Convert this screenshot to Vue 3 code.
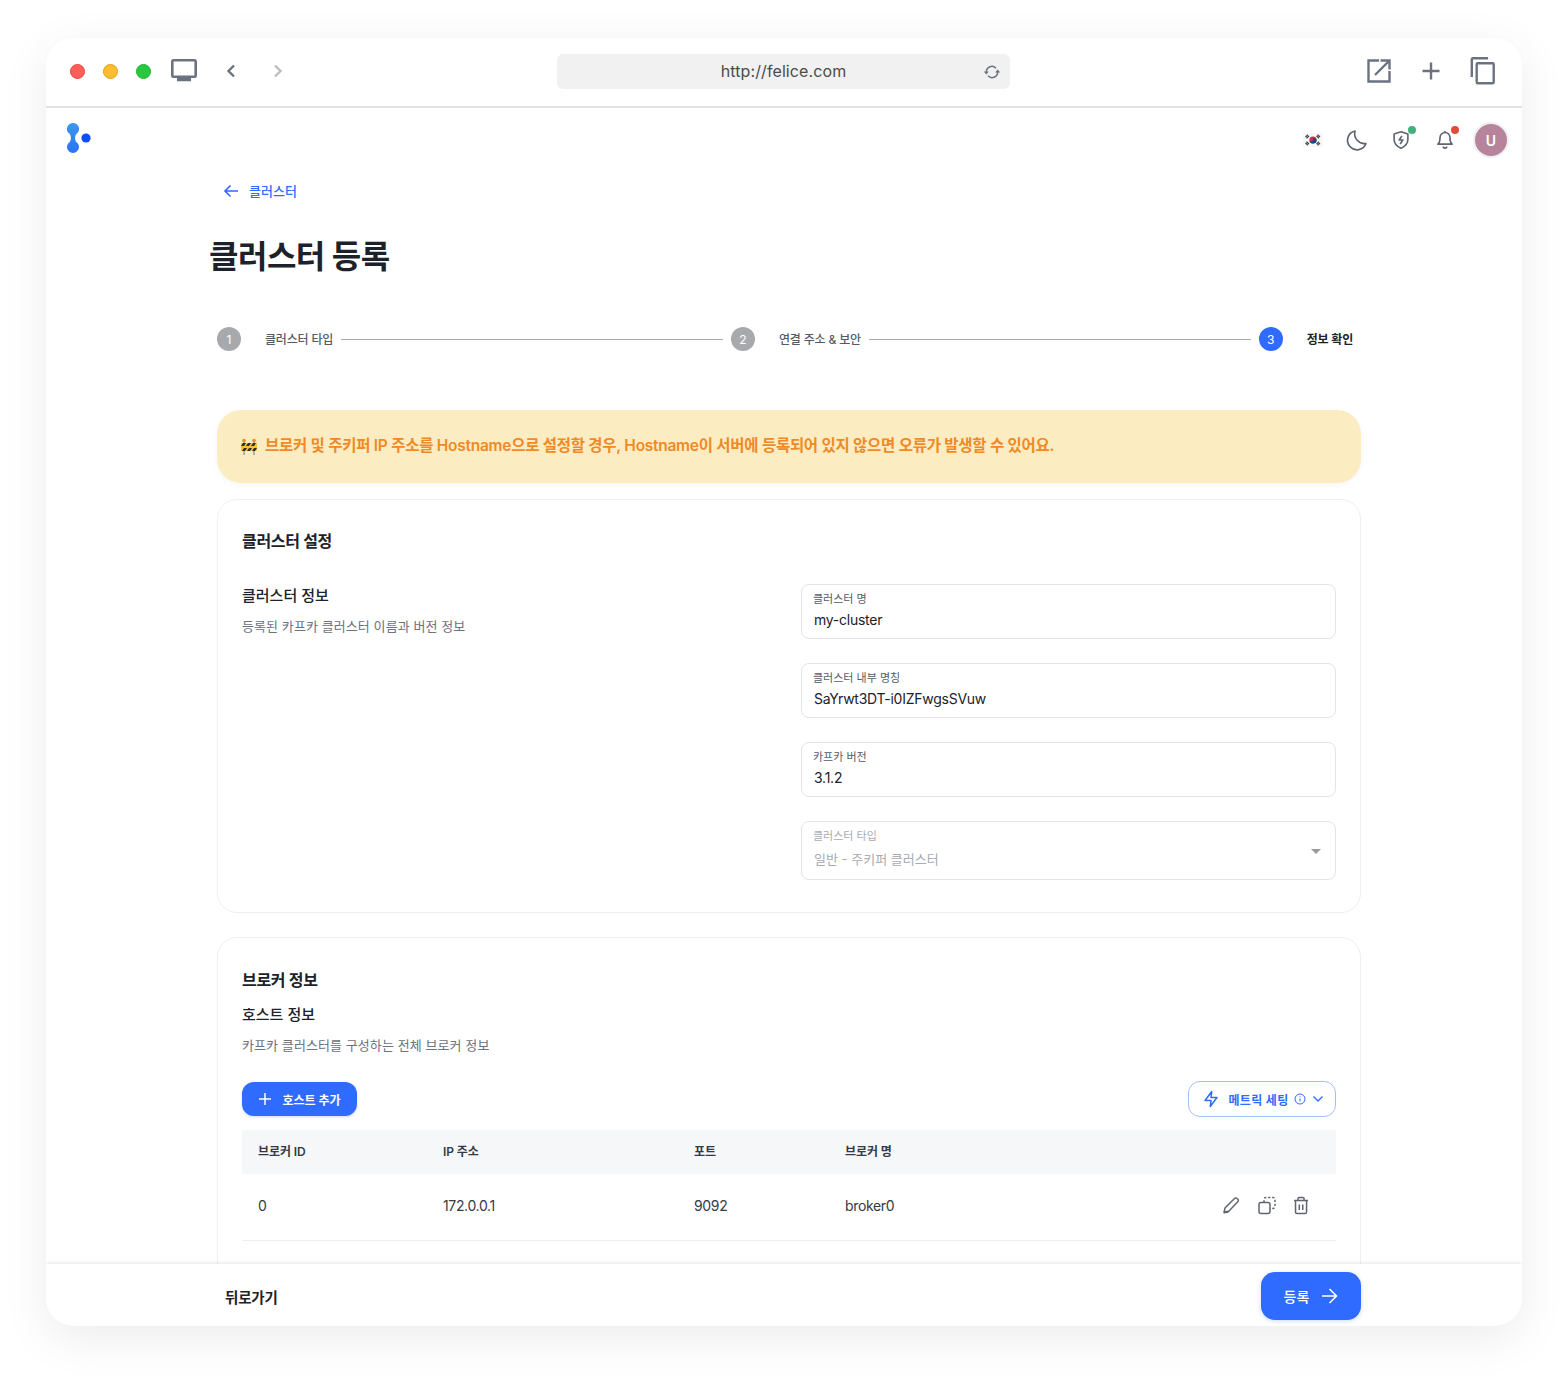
<script setup>
import { ref } from 'vue'

// 단계 표시
const steps = ref([
  { no: 1, label: '클러스터 타입', active: false },
  { no: 2, label: '연결 주소 & 보안', active: false },
  { no: 3, label: '정보 확인', active: true }
])

const fields = ref([
  { label: '클러스터 명', value: 'my-cluster' },
  { label: '클러스터 내부 명칭', value: 'SaYrwt3DT-i0IZFwgsSVuw' },
  { label: '카프카 버전', value: '3.1.2' }
])

const brokers = ref([
  { id: '0', ip: '172.0.0.1', port: '9092', name: 'broker0' }
])
</script>

<template>
  <div class="shell">
    <div class="window">
      <!-- 브라우저 상단 -->
      <header class="titlebar">
        <div class="titlebar__left">
          <span class="light light--red"></span>
          <span class="light light--yellow"></span>
          <span class="light light--green"></span>
          <svg class="monitor" width="26" height="24" viewBox="0 0 26 24" fill="none" stroke="#6b7280">
            <rect x="1.3" y="1.3" width="23.4" height="16.4" rx="1.5" stroke-width="2.6" />
            <path d="M6 20.5h14" stroke-width="3.6" />
          </svg>
          <svg class="chev" width="12" height="16" viewBox="0 0 12 16" fill="none" stroke="#6b7280" stroke-width="2.4">
            <path d="M9 2.5 3.5 8 9 13.5" />
          </svg>
          <svg class="chev chev--next" width="12" height="16" viewBox="0 0 12 16" fill="none" stroke="#bdbdbd" stroke-width="2.4">
            <path d="M3 2.5 8.5 8 3 13.5" />
          </svg>
        </div>
        <div class="urlbar">
          <span>http://felice.com</span>
          <svg class="urlbar__reload" width="18" height="14" viewBox="0 0 18 14" fill="none" stroke="#6b7280" stroke-width="1.5">
            <path d="M3.4 7a5.4 5.4 0 0 1 9.6-3.6" />
            <path d="M14.6 7A5.4 5.4 0 0 1 5 10.6" />
            <path d="M.8 6.4h5L3.3 9.4z" fill="#6b7280" stroke="none" />
            <path d="M12.2 7.6h5l-2.5-3z" fill="#6b7280" stroke="none" />
          </svg>
        </div>
        <div class="titlebar__right">
          <svg width="26" height="26" viewBox="0 0 26 26" fill="none" stroke="#6b7280" stroke-width="2.4">
            <path d="M13 2.500H2.500v21h21V13" />
            <path d="M9 17 23 3M14.500 2.500h9v9" />
          </svg>
          <svg width="20" height="20" viewBox="0 0 20 20" fill="none" stroke="#6b7280" stroke-width="2.4">
            <path d="M10 1.500v17M1.500 10h17" />
          </svg>
          <svg width="26" height="28" viewBox="0 0 26 28" fill="none" stroke="#6b7280" stroke-width="2.4">
            <path d="M1.800 20V2.200a1 1 0 0 1 1-1H18" />
            <rect x="6.700" y="6.200" width="17" height="20" rx="1" />
          </svg>
        </div>
      </header>

      <div class="body">
        <div class="topbar">
          <svg width="24" height="30" viewBox="0 0 24 30">
            <defs>
              <linearGradient id="logoGrad" x1="0" y1="0" x2="0" y2="1">
                <stop offset="0" stop-color="#3d97f0" />
                <stop offset="1" stop-color="#2a72f6" />
              </linearGradient>
            </defs>
            <path d="M6 0a6 6 0 0 1 4.500 10c-3.200 1.700-3.200 8.300 0 10a6 6 0 1 1-9 0c3.200-1.700 3.200-8.300 0-10A6 6 0 0 1 6 0z" fill="url(#logoGrad)" />
            <circle cx="19" cy="15" r="4.600" fill="#0b4dff" />
          </svg>
          <div class="topbar__tools">
            <span class="tool">
              <svg width="20" height="14" viewBox="0 0 20 14">
                <rect width="20" height="14" fill="#f7f7f7" />
                <circle cx="10" cy="7" r="3.600" fill="#cd2e3a" />
                <path d="M6.400 7a3.600 3.600 0 0 0 7.200 0 1.800 1.800 0 0 0-3.600 0 1.800 1.800 0 0 1-3.600 0z" fill="#0f4a8a" />
                <path d="M2.500 4 5 1.800M3.500 5.200 6 3M14.500 1.800 17 4M13.500 3 16 5.200M2.500 10 5 12.200M3.500 8.800 6 11M14.500 12.200 17 10M13.500 11 16 8.800" stroke="#444" stroke-width="1.200" />
              </svg>
            </span>
            <span class="tool">
              <svg width="24" height="24" viewBox="0 0 24 24" fill="none" stroke="#5f6672" stroke-width="1.700" stroke-linecap="round" stroke-linejoin="round">
                <path d="M10 3a9.500 9.500 0 1 0 11 12.500A10 10 0 0 1 10 3z" />
              </svg>
            </span>
            <span class="tool">
              <svg width="22" height="22" viewBox="0 0 24 24" fill="none" stroke="#5f6672" stroke-width="1.800" stroke-linejoin="round">
                <path d="M12 3l7.500 2.500v6c0 4.500-3 7.500-7.500 9.500-4.500-2-7.500-5-7.500-9.500v-6z" />
                <path d="M13 7.500 10 12h4l-3 4.500" />
              </svg>
              <i class="dot dot--green"></i>
            </span>
            <span class="tool tool--last">
              <svg width="20" height="22" viewBox="0 0 24 24" fill="none" stroke="#5f6672" stroke-width="2" stroke-linecap="round" stroke-linejoin="round">
                <path d="M6 9a6 6 0 0 1 12 0c0 6 2.500 8 2.500 8h-17S6 15 6 9z" />
                <path d="M10 20.500a2.200 2.200 0 0 0 4 0M12 3V2" />
              </svg>
              <i class="dot dot--red"></i>
            </span>
            <span class="avatar">U</span>
          </div>
        </div>

        <main class="page">
          <a class="back">
            <svg width="16" height="14" viewBox="0 0 16 14" fill="none" stroke="#2f6bff" stroke-width="1.600">
              <path d="M15 7H2M7.500 1.500 2 7l5.500 5.500" />
            </svg>
            <span class="back__text">클러스터</span>
          </a>
          <h1 class="title">클러스터 등록</h1>

          <ol class="stepper">
            <template v-for="(step, i) in steps" :key="step.no">
              <li class="step" :class="{ 'step--active': step.active }">
                <span class="step__no">{{ step.no }}</span>
                <span class="step__label">{{ step.label }}</span>
              </li>
              <li v-if="i < steps.length - 1" class="step__line"></li>
            </template>
          </ol>

          <div class="alert">
            <svg width="16" height="17" viewBox="0 0 16 17">
              <path d="M3 3v14M13 3v14" stroke="#a3a3a3" stroke-width="1.600" />
              <circle cx="3" cy="2.500" r="1.800" fill="#f08a24" />
              <circle cx="13" cy="2.500" r="1.800" fill="#f08a24" />
              <rect y="5" width="16" height="8" fill="#f2c230" />
              <path d="M0 8h3L5 5H2zM5 8h3l2-3H7zM10 8h3l2-3h-3zM1 13h3l2-3H3zM6 13h3l2-3H8zM11 13h3l2-3h-3z" fill="#2b2b2b" />
            </svg>
            <span class="alert__text">브로커 및 주키퍼 IP 주소를 Hostname으로 설정할 경우, Hostname이 서버에 등록되어 있지 않으면 오류가 발생할 수 있어요.</span>
          </div>

          <section class="card">
            <h2 class="card__title card__title--first">클러스터 설정</h2>
            <div class="settings">
              <div>
                <h3 class="sub">클러스터 정보</h3>
                <p class="desc">등록된 카프카 클러스터 이름과 버전 정보</p>
              </div>
              <div class="fields">
                <div v-for="field in fields" :key="field.label" class="field">
                  <label class="field__label">{{ field.label }}</label>
                  <div class="field__value">{{ field.value }}</div>
                </div>
                <div class="field field--select">
                  <label class="field__label">클러스터 타입</label>
                  <div class="field__value">일반 - 주키퍼 클러스터</div>
                  <i class="caret"></i>
                </div>
              </div>
            </div>
          </section>

          <section class="card card--brokers">
            <h2 class="card__title">브로커 정보</h2>
            <h3 class="sub sub--host">호스트 정보</h3>
            <p class="desc desc--host">카프카 클러스터를 구성하는 전체 브로커 정보</p>

            <div class="actions">
              <button class="btn-add">
                <svg width="14" height="14" viewBox="0 0 14 14" fill="none" stroke="#fff" stroke-width="1.500">
                  <path d="M7 1v12M1 7h12" />
                </svg>
                호스트 추가
              </button>
              <button class="btn-metric">
                <svg width="18" height="18" viewBox="0 0 24 24" fill="none" stroke="#2f6bff" stroke-width="2" stroke-linejoin="round">
                  <path d="M13 2 4 14h8l-1 8 9-12h-8l1-8z" />
                </svg>
                <span class="btn-metric__text">메트릭 세팅</span>
                <svg class="btn-metric__info" width="12" height="12" viewBox="0 0 12 12" fill="none" stroke="#2f6bff" stroke-width="1">
                  <circle cx="6" cy="6" r="5" />
                  <path d="M6 5.500v3M6 3.300v1" />
                </svg>
                <svg class="btn-metric__chev" width="12" height="8" viewBox="0 0 12 8" fill="none" stroke="#2f6bff" stroke-width="1.300">
                  <path d="M1.500 1.500 6 6l4.500-4.500" />
                </svg>
              </button>
            </div>

            <table class="table">
              <colgroup>
                <col style="width: 185px" />
                <col style="width: 251px" />
                <col style="width: 151px" />
                <col />
                <col style="width: 130px" />
              </colgroup>
              <thead>
                <tr>
                  <th>브로커 ID</th>
                  <th>IP 주소</th>
                  <th>포트</th>
                  <th>브로커 명</th>
                  <th></th>
                </tr>
              </thead>
              <tbody>
                <tr v-for="broker in brokers" :key="broker.id">
                  <td>{{ broker.id }}</td>
                  <td>{{ broker.ip }}</td>
                  <td>{{ broker.port }}</td>
                  <td>{{ broker.name }}</td>
                  <td>
                    <div class="row-tools">
                      <svg class="row-tools__edit" width="19" height="19" viewBox="0 0 18 18" fill="none" stroke="#5f6672" stroke-width="1.500" stroke-linejoin="round">
                        <path d="M2 16l1-4.500L12.500 2a1.700 1.700 0 0 1 2.500 0l.8.800a1.700 1.700 0 0 1 0 2.400L6.500 15z" />
                        <path d="M2 16l4.500-1" stroke-width="2" />
                      </svg>
                      <svg width="19" height="19" viewBox="0 0 18 18" fill="none" stroke="#5f6672" stroke-width="1.500">
                        <rect x="1" y="6" width="11" height="11" rx="2" />
                        <path d="M6 6V3a2 2 0 0 1 2-2h7a2 2 0 0 1 2 2v7a2 2 0 0 1-2 2h-3" stroke-dasharray="2.200 1.800" />
                      </svg>
                      <svg width="17" height="19" viewBox="0 0 16 18" fill="none" stroke="#5f6672" stroke-width="1.500">
                        <path d="M1 4h14M5 4V2a1 1 0 0 1 1-1h4a1 1 0 0 1 1 1v2M2.500 4v11.500a1.500 1.500 0 0 0 1.500 1.500h8a1.500 1.500 0 0 0 1.500-1.500V4M6.300 8v5.500M9.700 8v5.500" />
                      </svg>
                    </div>
                  </td>
                </tr>
              </tbody>
            </table>
          </section>
        </main>
      </div>

      <footer class="footer">
        <span class="footer__back">뒤로가기</span>
        <button class="btn-submit">
          등록
          <svg width="17" height="16" viewBox="0 0 17 16" fill="none" stroke="#fff" stroke-width="1.600">
            <path d="M1 8h14.500M8.500 1l7 7-7 7" />
          </svg>
        </button>
      </footer>
    </div>
  </div>
</template>

<style>
html,
body {
  margin: 0;
  background: #fff;
}
</style>

<style scoped>
.shell {
  box-sizing: border-box;
  height: 1381px;
  padding: 38px 46px 55px;
  overflow: hidden;
}
.window {
  box-sizing: border-box;
  width: 1476px;
  height: 1288px;
  background: #fff;
  border-radius: 28px;
  box-shadow: 0 12px 48px rgba(0, 0, 0, 0.08);
  overflow: hidden;
  display: flex;
  flex-direction: column;
  font-family: Inter, "Noto Sans CJK KR", sans-serif;
  color: #1d2129;
}

/* 브라우저 상단 */
.titlebar {
  flex: none;
  box-sizing: border-box;
  height: 70px;
  padding-bottom: 2px;
  border-bottom: 2px solid #e2e2e2;
  display: grid;
  grid-template-columns: 511px 453px 1fr;
  align-items: center;
}
.titlebar__left {
  display: flex;
  align-items: center;
  padding-left: 24px;
}
.light {
  width: 15px;
  height: 15px;
  border-radius: 50%;
  margin-right: 18px;
  box-sizing: border-box;
}
.light--red { background: #ff5f57; border: 1px solid #e2483f; }
.light--yellow { background: #febc2e; border: 1px solid #e09c1a; }
.light--green { background: #28c840; border: 1px solid #20b035; }
.monitor { margin-left: 2px; }
.chev { margin-left: 28px; }
.chev--next { margin-left: 35px; }
.urlbar {
  position: relative;
  height: 35px;
  border-radius: 6px;
  background: #f1f1f1;
  display: flex;
  align-items: center;
  justify-content: center;
  font-size: 16px;
  letter-spacing: 0.1px;
  color: #4b4b4b;
}
.urlbar__reload {
  position: absolute;
  right: 9px;
  top: 11px;
}
.titlebar__right {
  display: flex;
  justify-content: flex-end;
  align-items: center;
  gap: 29px;
  padding-right: 26px;
}

/* 앱 상단 */
.body {
  flex: 1;
  min-height: 0;
  overflow: hidden;
}
.topbar {
  height: 64px;
  box-sizing: border-box;
  padding: 0 15px 5px 21px;
  display: flex;
  justify-content: space-between;
  align-items: center;
}
.topbar__tools {
  display: flex;
  align-items: center;
  margin-bottom: -5px;
}
.tool {
  position: relative;
  width: 44px;
  height: 34px;
  display: flex;
  align-items: center;
  justify-content: center;
}
.tool--last { width: 43px; }
.dot {
  position: absolute;
  width: 8px;
  height: 8px;
  border-radius: 50%;
  top: 3px;
  right: 7px;
}
.dot--green { background: #3eb27a; }
.dot--red { background: #e5493a; }
.avatar {
  margin-left: 9px;
  width: 32px;
  height: 32px;
  border-radius: 50%;
  background: #b8849c;
  box-shadow: 0 0 0 2px #eef0f3;
  color: #fff;
  font-size: 14px;
  font-weight: 600;
  display: flex;
  align-items: center;
  justify-content: center;
}

/* 본문 */
.page {
  margin-left: 171px;
  width: 1144px;
}
.back {
  height: 38px;
  padding-left: 6px;
  display: flex;
  align-items: center;
  gap: 10px;
  font-size: 13px;
  font-weight: 500;
  color: #2f6bff;
}
.back__text { padding-bottom: 2px; }
.title {
  margin: 25px 0 0 -8px;
  height: 43px;
  line-height: 43px;
  font-size: 32px;
  font-weight: 700;
  letter-spacing: -0.5px;
  color: #1d2129;
}

/* 단계 */
.stepper {
  list-style: none;
  margin: 49px 0 0;
  padding: 0 8px 0 0;
  height: 24px;
  display: flex;
  align-items: center;
}
.step {
  display: flex;
  align-items: center;
  font-size: 12px;
  font-weight: 500;
  color: #555b66;
}
.step__no {
  width: 24px;
  height: 24px;
  border-radius: 50%;
  background: #a8a9ad;
  color: #fff;
  font-size: 12px;
  font-weight: 400;
  display: flex;
  align-items: center;
  justify-content: center;
  margin-right: 24px;
}
.step__label {
  padding-bottom: 2px;
  letter-spacing: -0.18px;
}
.step--active { color: #1d2129; font-weight: 600; }
.step--active .step__no { background: #2f6bff; }
.step__line {
  flex: 1;
  height: 1px;
  background: #a8a9ad;
  margin: 0 8px;
}

/* 안내 */
.alert {
  margin-top: 59px;
  height: 73px;
  box-sizing: border-box;
  padding: 0 24px;
  background: #fcecc2;
  border-radius: 24px;
  box-shadow: 0 2px 6px rgba(0, 0, 0, 0.04);
  display: flex;
  align-items: center;
  gap: 8px;
  font-size: 15.5px;
  font-weight: 600;
  letter-spacing: -0.27px;
  color: #ef8a26;
}
.alert__text { padding-bottom: 5px; }

/* 카드 */
.card {
  box-sizing: border-box;
  margin-top: 16px;
  height: 414px;
  padding: 24px 24px 32px;
  border: 1px solid #eeeff1;
  border-radius: 20px;
}
.card--brokers {
  margin-top: 24px;
  height: 500px;
}
.card__title {
  margin: 0;
  height: 36px;
  line-height: 36px;
  font-size: 16px;
  font-weight: 700;
  letter-spacing: -0.3px;
}
.card__title--first {
  height: 34px;
  line-height: 34px;
}
.settings {
  margin-top: 26px;
  display: grid;
  grid-template-columns: 559px 535px;
}
.sub {
  margin: 0;
  height: 24px;
  line-height: 24px;
  font-size: 15px;
  font-weight: 500;
}
.desc {
  margin: 6px 0 0;
  height: 24px;
  line-height: 24px;
  font-size: 13px;
  letter-spacing: 0.08px;
  color: #6b7280;
}
.sub--host { margin-top: 5px; }
.desc--host { margin-top: 6px; }
.fields {
  display: flex;
  flex-direction: column;
  gap: 24px;
}
.field {
  position: relative;
  box-sizing: border-box;
  height: 55px;
  padding: 5px 11px 0;
  border: 1px solid #e3e4e8;
  border-radius: 8px;
}
.field__label {
  display: block;
  height: 18px;
  line-height: 18px;
  font-size: 11px;
  color: #555b66;
}
.field__value {
  margin: 1px 0 0 1px;
  height: 22px;
  line-height: 22px;
  font-size: 14px;
  letter-spacing: -0.25px;
  color: #1d2129;
}
.field--select { height: 59px; }
.field--select .field__label,
.field--select .field__value { color: #a9abb0; }
.field--select .field__value {
  margin-top: 3px;
  font-size: 13px;
  letter-spacing: 0;
}
.caret {
  position: absolute;
  right: 14px;
  top: 27px;
  border-left: 5px solid transparent;
  border-right: 5px solid transparent;
  border-top: 5px solid #9a9a9a;
}

/* 버튼 */
.actions {
  margin-top: 24px;
  display: flex;
  justify-content: space-between;
  align-items: center;
  height: 36px;
}
button {
  font-family: inherit;
  cursor: pointer;
}
.btn-add {
  height: 34px;
  width: 115px;
  border: 0;
  border-radius: 12px;
  background: #2f6bff;
  box-shadow: 0 1px 3px rgba(47, 107, 255, 0.25);
  color: #fff;
  font-size: 12px;
  font-weight: 600;
  display: flex;
  align-items: center;
  justify-content: center;
  gap: 10px;
}
.btn-metric {
  height: 36px;
  width: 148px;
  box-sizing: border-box;
  border: 1px solid #a3bffb;
  border-radius: 12px;
  background: #fff;
  color: #2f6bff;
  font-size: 12px;
  font-weight: 600;
  display: flex;
  align-items: center;
  justify-content: center;
  padding: 0 0 0 2px;
  gap: 8px;
}
.btn-metric__text { letter-spacing: 0.3px; }
.btn-metric__info { margin-left: -3px; }
.btn-metric__chev { margin-left: -2px; }

/* 표 */
.table {
  margin-top: 13px;
  width: 100%;
  table-layout: fixed;
  border-collapse: collapse;
}
.table th {
  height: 44px;
  box-sizing: border-box;
  padding: 0 16px 3px;
  background: #f6f7f9;
  text-align: left;
  font-size: 12px;
  font-weight: 600;
  letter-spacing: -0.1px;
  color: #333a45;
}
.table td {
  height: 66px;
  box-sizing: border-box;
  padding: 0 16px 3px;
  border-bottom: 1px solid #eeeff1;
  font-size: 14px;
  letter-spacing: -0.35px;
  color: #333a45;
}
.row-tools {
  display: flex;
  align-items: center;
  justify-content: flex-end;
  gap: 17px;
  padding-right: 11px;
}
.row-tools__edit { margin-right: 1px; }

/* 하단 */
.footer {
  flex: none;
  box-sizing: border-box;
  height: 62px;
  padding: 0 161px 0 179px;
  background: #fff;
  box-shadow: 0 -1px 4px rgba(0, 0, 0, 0.1);
  z-index: 1;
  display: flex;
  align-items: center;
  justify-content: space-between;
}
.footer__back {
  font-size: 14.5px;
  font-weight: 600;
  letter-spacing: -0.2px;
  padding-top: 2px;
}
.btn-submit {
  margin-top: 2px;
  width: 100px;
  height: 48px;
  border: 0;
  border-radius: 14px;
  background: #2f6bff;
  box-shadow: 0 1px 4px rgba(47, 107, 255, 0.25);
  color: #fff;
  font-size: 14px;
  font-weight: 500;
  display: flex;
  align-items: center;
  justify-content: center;
  gap: 12px;
}
</style>
